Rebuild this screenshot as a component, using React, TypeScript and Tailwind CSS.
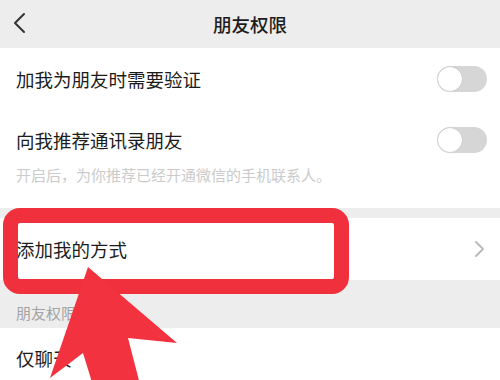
const Toggle = () => {
    return (
        <div className="w-[50px] h-[26px] rounded-full bg-[#d6d6d6] p-[1px] flex items-center">
            <div className="w-[24px] h-[24px] rounded-full bg-white shadow-[0_0_1px_rgba(0,0,0,0.25)]" />
        </div>
    );
};

const App = () => {
    return (
        <div className="relative w-[500px] h-[380px] overflow-hidden bg-[#ededed] text-[#1c1c1c] font-['Noto_Sans_CJK_SC','Noto_Sans',sans-serif]">
            {/* header */}
            <div className="relative h-[48px] flex items-center justify-center">
                <svg className="absolute left-[10px] top-[10px]" width="20" height="28" viewBox="0 0 20 28" fill="none">
                    <path d="M14 4 L5 13 L14 22" stroke="#333" strokeWidth="2" strokeLinecap="round" strokeLinejoin="round" />
                </svg>
                <span className="text-[18.5px] font-medium leading-[24px]">朋友权限</span>
            </div>

            {/* switches */}
            <div className="bg-white">
                <div className="h-[62px] px-4 flex items-center justify-between">
                    <span className="text-[18.5px] leading-[24px]">加我为朋友时需要验证</span>
                    <div className="pr-[-3px] mr-[-3px]">
                        <Toggle />
                    </div>
                </div>
                <div className="px-4 pt-[16px] pb-[23px]">
                    <div className="h-[28px] flex items-center justify-between">
                        <span className="text-[18.5px] leading-[24px]">向我推荐通讯录朋友</span>
                        <div className="mr-[-3px]">
                            <Toggle />
                        </div>
                    </div>
                    <p className="mt-[11px] text-[15px] leading-[20px] text-[#cbcbcb]">开启后，为你推荐已经开通微信的手机联系人。</p>
                </div>
            </div>

            <div className="h-[10px]" />

            {/* add me row */}
            <div className="h-[62px] bg-white px-4 flex items-center justify-between">
                <span className="text-[18.5px] leading-[24px]">添加我的方式</span>
                <svg width="12" height="18" viewBox="0 0 12 18" fill="none" className="mr-[-1px]">
                    <path d="M3 2 L10 9 L3 16" stroke="#b8b8b8" strokeWidth="1.8" strokeLinecap="round" strokeLinejoin="round" />
                </svg>
            </div>

            <div className="h-[48px] px-4 flex items-end pb-[5px]">
                <span className="text-[15px] leading-[20px] text-[#a3a3a3]">朋友权限</span>
            </div>

            <div className="h-[60px] bg-white px-4 flex items-center">
                <span className="text-[18.5px] leading-[24px]">仅聊天</span>
            </div>

            {/* red highlight frame */}
            <div className="absolute left-[3px] top-[208px] w-[346px] h-[86px] rounded-[17px] border-[15px] border-[#f0303c]" />

            {/* red arrow */}
            <svg className="absolute left-0 top-0" width="500" height="380" viewBox="0 0 500 380">
                <polygon points="88,267 177,343 128,338 142,392 95,392 83,353 50,378" fill="#f2323e" />
            </svg>
        </div>
    );
};

export default App;
